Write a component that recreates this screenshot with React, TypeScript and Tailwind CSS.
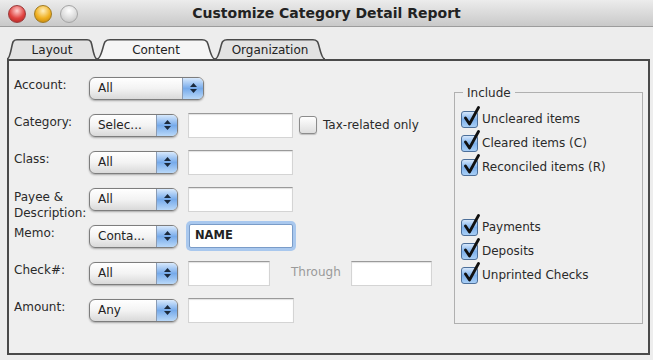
import React from "react";

const PopUp = ({ value, width }: { value: string; width: string }) => (
    <div
        className={`flex h-[23px] ${width} shrink-0 items-stretch rounded-[6px] border border-[#7d7d7d] bg-gradient-to-b from-white via-[#f3f3f3] to-[#d9d9d9] shadow-[0_1px_2px_rgba(0,0,0,0.3)]`}
    >
        <span className="flex-1 pl-[8px] text-[12px] leading-[21px] text-[#222]">{value}</span>
        <span className="flex w-[21px] flex-col items-center justify-center gap-[2px] rounded-r-[5px] border-l border-[#8a9bb3] bg-gradient-to-b from-[#d8e9fc] via-[#76aaea] to-[#b9d8f8]">
            <svg width="7" height="4" viewBox="0 0 7 4">
                <path d="M0 4 L3.5 0 L7 4 Z" fill="#1b2a3d" />
            </svg>
            <svg width="7" height="4" viewBox="0 0 7 4">
                <path d="M0 0 L3.5 4 L7 0 Z" fill="#1b2a3d" />
            </svg>
        </span>
    </div>
);

const Field = ({ width, children, focus }: { width: string; children?: React.ReactNode; focus?: boolean }) => (
    <div
        className={
            focus
                ? `flex h-[24px] ${width} shrink-0 items-center rounded-[2px] border border-[#7a9cc8] bg-white pl-[5px] shadow-[0_0_0_3px_#a9c8ee]`
                : `flex h-[25px] ${width} shrink-0 items-center border border-[#d4d4d4] border-t-[#9a9a9a] bg-white pl-[5px] shadow-[inset_0_1px_1px_rgba(0,0,0,0.12)]`
        }
    >
        {children}
    </div>
);

const Label = ({ children }: { children: React.ReactNode }) => (
    <span className="w-[75px] shrink-0 pb-[6px] text-[12px] leading-[14px] text-[#2a2a2a]">{children}</span>
);

const Tab = ({ label, width, selected }: { label: string; width: string; selected?: boolean }) => (
    <div className={`relative flex h-[20px] ${width} items-center justify-center`}>
        <svg className="absolute inset-0 h-full w-full" viewBox="0 0 100 20" preserveAspectRatio="none">
            <path
                d="M0 20 C4 20 5 5 7 2.5 Q8.5 0.8 11 0.8 L89 0.8 Q91.5 0.8 93 2.5 C95 5 96 20 100 20"
                fill={selected ? "#f5f5f5" : "#e2e2e2"}
                stroke="#4a4a4a"
                strokeWidth="1.6"
                vectorEffect="non-scaling-stroke"
            />
        </svg>
        <span className="relative pt-[1px] text-[12px] font-medium text-[#222]">{label}</span>
    </div>
);

const Check = ({ label }: { label: string }) => (
    <div className="flex h-[20px] items-center gap-[4px]">
        <span className="relative h-[17px] w-[17px] shrink-0 rounded-[3px] border border-[#4d6f99] bg-gradient-to-b from-[#d5e7fb] via-[#7eb1ec] to-[#a9cff6]">
            <svg className="absolute -top-[6px] left-[1px]" width="18" height="21" viewBox="0 0 18 21">
                <path d="M2.5 12 L6.5 18 L15.5 1.5" fill="none" stroke="#111" strokeWidth="2.8" strokeLinecap="round" strokeLinejoin="round" />
            </svg>
        </span>
        <span className="text-[12px] text-[#2a2a2a]">{label}</span>
    </div>
);

export default function App() {
    return (
        <div className="flex h-[360px] w-[653px] flex-col overflow-hidden bg-[#ededed] font-['DejaVu_Sans',Verdana,sans-serif]">
            {/* title bar */}
            <div className="relative flex h-[27px] shrink-0 items-center justify-center border-b border-[#9c9c9c] bg-gradient-to-b from-[#ececec] to-[#c9c9c9]">
                <div className="absolute left-[8px] top-[5px] flex gap-[8px]">
                    <span className="h-[18px] w-[18px] rounded-full border border-[#9a3a3a] bg-[radial-gradient(circle_at_50%_30%,#ffd0d0,#e0423f_55%,#a8201e)]" />
                    <span className="h-[18px] w-[18px] rounded-full border border-[#a07a20] bg-[radial-gradient(circle_at_50%_30%,#fff0c0,#f0b020_55%,#b87a0a)]" />
                    <span className="h-[18px] w-[18px] rounded-full border border-[#a5a5a5] bg-[radial-gradient(circle_at_50%_30%,#ffffff,#dcdcdc_55%,#bcbcbc)]" />
                </div>
                <span className="text-[14px] font-bold text-[#222]">Customize Category Detail Report</span>
            </div>

            {/* tabs */}
            <div className="mt-[12px] flex pl-[7px]">
                <Tab label="Layout" width="w-[90px]" />
                <Tab label="Content" width="w-[118px]" selected />
                <Tab label="Organization" width="w-[110px]" />
            </div>

            {/* panel */}
            <div className="ml-[7px] mr-[3px] flex h-[296px] border-2 border-[#4a4a4a] bg-[#efefef]">
                <div className="flex flex-1 flex-col gap-[13px] pl-[5px] pt-[15px]">
                    <div className="flex h-[24px] items-center">
                        <Label>Account:</Label>
                        <PopUp value="All" width="w-[115px]" />
                    </div>
                    <div className="flex h-[24px] items-center">
                        <Label>Category:</Label>
                        <PopUp value="Selec..." width="w-[89px]" />
                        <div className="ml-[10px]">
                            <Field width="w-[105px]" />
                        </div>
                        <span className="ml-[6px] h-[18px] w-[18px] rounded-[3px] border border-[#8c8c8c] bg-gradient-to-b from-white to-[#dedede] shadow-[0_1px_1px_rgba(0,0,0,0.2)]" />
                        <span className="ml-[6px] text-[12px] text-[#2a2a2a]">Tax-related only</span>
                    </div>
                    <div className="flex h-[24px] items-center">
                        <Label>Class:</Label>
                        <PopUp value="All" width="w-[89px]" />
                        <div className="ml-[10px]">
                            <Field width="w-[105px]" />
                        </div>
                    </div>
                    <div className="flex h-[24px] items-center">
                        <span className="mt-[11px] w-[75px] shrink-0 text-[12px] leading-[16px] text-[#2a2a2a]">
                            Payee &amp;
                            <br />
                            Description:
                        </span>
                        <PopUp value="All" width="w-[89px]" />
                        <div className="ml-[10px]">
                            <Field width="w-[105px]" />
                        </div>
                    </div>
                    <div className="flex h-[24px] items-center">
                        <Label>Memo:</Label>
                        <PopUp value="Conta..." width="w-[89px]" />
                        <div className="ml-[11px]">
                            <Field width="w-[104px]" focus>
                                <span className="text-[11.5px] font-semibold text-[#222]">NAME</span>
                            </Field>
                        </div>
                    </div>
                    <div className="flex h-[24px] items-center">
                        <Label>Check#:</Label>
                        <PopUp value="All" width="w-[89px]" />
                        <div className="ml-[10px]">
                            <Field width="w-[82px]" />
                        </div>
                        <span className="ml-[21px] pb-[2px] text-[12px] text-[#9a9a9a]">Through</span>
                        <div className="ml-[10px]">
                            <Field width="w-[81px]" />
                        </div>
                    </div>
                    <div className="flex h-[24px] items-center">
                        <Label>Amount:</Label>
                        <PopUp value="Any" width="w-[89px]" />
                        <div className="ml-[10px]">
                            <Field width="w-[106px]" />
                        </div>
                    </div>
                </div>

                {/* include group */}
                <div className="relative mr-[5px] mt-[31px] h-[232px] w-[189px] border border-[#b0b0b0]">
                    <span className="absolute -top-[9px] left-[8px] bg-[#efefef] px-[4px] text-[12px] text-[#2a2a2a]">
                        Include
                    </span>
                    <div className="flex flex-col gap-[4px] pl-[6px] pt-[16px]">
                        <Check label="Uncleared items" />
                        <Check label="Cleared items (C)" />
                        <Check label="Reconciled items (R)" />
                    </div>
                    <div className="mt-[40px] flex flex-col gap-[4px] pl-[6px]">
                        <Check label="Payments" />
                        <Check label="Deposits" />
                        <Check label="Unprinted Checks" />
                    </div>
                </div>
            </div>
        </div>
    );
}
